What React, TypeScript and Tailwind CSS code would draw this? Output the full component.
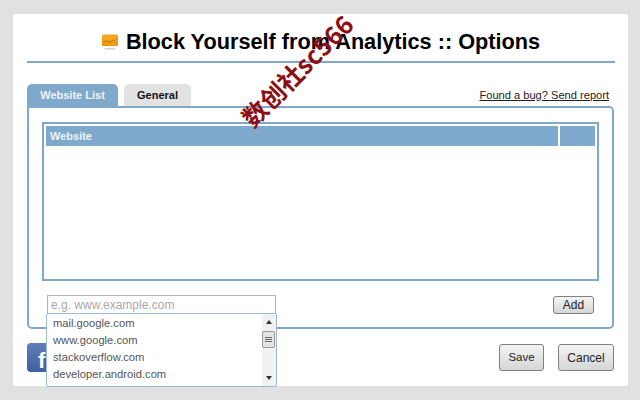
import * as React from "react"

const sites = ["mail.google.com", "www.google.com", "stackoverflow.com", "developer.android.com"]

function Logo() {
  return (
    <svg width="16" height="17" viewBox="0 0 16 17" className="shrink-0">
      <rect x="0" y="0.5" width="16" height="11.5" rx="1.5" fill="#f5a623" />
      <rect x="0" y="7" width="16" height="5" fill="#f09a12" />
      <path d="M1 7.5 L5 7 L8 8 L11 6 L13 6.5 L15.5 3.5" fill="none" stroke="#a86a10" strokeWidth="0.7" />
      <rect x="2.5" y="14" width="11" height="1.5" fill="#d2d2d2" />
    </svg>
  )
}

function GrayButton({ label, className }: { label: string; className: string }) {
  return (
    <button className={"rounded-[3px] border border-[#808080] bg-gradient-to-b from-[#f4f4f4] to-[#d6d6d6] text-[#222] " + className}>
      {label}
    </button>
  )
}

export default function App() {
  return (
    <div className="relative h-[400px] w-[640px] overflow-hidden bg-[#e1e1e1] px-[13px] pt-[14px] font-['Liberation_Sans',Arial,sans-serif]">
      <div className="relative flex h-[372px] w-[615px] flex-col rounded-[3px] bg-white px-[14px]">
        <div className="mr-[-1px] flex h-[49px] items-center justify-center gap-[8px] border-b-2 border-[#7fa9cc] pt-[9px]">
          <Logo />
          <h1 className="text-[21.7px] font-bold leading-none text-black">Block Yourself from Analytics :: Options</h1>
        </div>

        <div className="mt-[21px] flex h-[22px] items-stretch">
          <div className="flex w-[91px] items-center justify-center rounded-t-[5px] bg-[#7fa9cc] text-[11px] font-bold text-[#eef4f9]">Website List</div>
          <div className="ml-[6px] flex w-[67px] items-center justify-center rounded-t-[5px] bg-[#e2e2e2] text-[11px] font-bold text-[#111]">General</div>
          <a className="ml-auto mr-[5px] self-center text-[11.1px] leading-[14px] text-[#222] underline">Found a bug? Send report</a>
        </div>

        <div className="h-[223px] w-[587px] rounded-b-[5px] rounded-tr-[5px] border-2 border-[#7fa9cc] px-[13px] pt-[14px]">
          <div className="h-[159px] w-[557px] border-2 border-[#7fa9cc] p-[2px]">
            <div className="flex h-[20px] gap-[2px]">
              <div className="flex w-[512px] items-center bg-[#7fa9cc] pl-[4px] text-[11px] font-bold text-[#eef4f9]">Website</div>
              <div className="flex-1 bg-[#7fa9cc]" />
            </div>
          </div>
          <div className="mt-[14px] flex items-start justify-between">
            <input
              placeholder="e.g. www.example.com"
              className="ml-[5px] h-[19px] w-[229px] border border-[#b4b4b4] px-[3px] text-[12px] placeholder:text-[#a8a8a8]"
            />
            <GrayButton label="Add" className="mr-[5px] mt-px h-[18px] w-[41px] text-[12px] leading-none" />
          </div>
        </div>

        <div className="mt-[14px] flex items-start justify-between">
          <div className="flex h-[29px] w-[40px] items-end rounded-[4px] bg-gradient-to-b from-[#5f7fb8] to-[#3f5f9f] pl-[11px]">
            <span className="text-[22px] font-bold leading-[22px] text-white">f</span>
          </div>
          <div className="flex gap-[14px] pt-px">
            <GrayButton label="Save" className="h-[27px] w-[45px] text-[11.5px]" />
            <GrayButton label="Cancel" className="h-[27px] w-[56px] text-[12px]" />
          </div>
        </div>

        {/* autocomplete menu over the panel */}
        <div className="absolute left-[33px] top-[299px] flex h-[74px] w-[231px] rounded-[2px] border border-[#9dbbd6] bg-white">
          <ul className="flex-1 pl-[6px] pt-px text-[11.2px] leading-[17px] text-[#555]">
            {sites.map((s) => (
              <li key={s}>{s}</li>
            ))}
          </ul>
          <div className="flex w-[14px] flex-col items-center justify-between bg-[#f1f1f1] py-[6px]">
            <div className="h-0 w-0 border-x-[3px] border-b-[4px] border-x-transparent border-b-[#333]" />
            <div className="absolute right-[1px] top-[17px] flex h-[17px] w-[13px] flex-col items-center justify-center gap-px rounded-[2px] border border-[#9a9a9a] bg-[#e4e4e4]">
              <div className="h-px w-[7px] bg-[#666]" />
              <div className="h-px w-[7px] bg-[#666]" />
              <div className="h-px w-[7px] bg-[#666]" />
            </div>
            <div className="h-0 w-0 border-x-[3px] border-t-[4px] border-x-transparent border-t-[#333]" />
          </div>
        </div>
      </div>

      {/* watermark stamped over the page */}
      <div className="absolute left-[224px] top-[55px] -rotate-45 whitespace-nowrap font-['Noto_Sans_CJK_SC','DejaVu_Sans',sans-serif] text-[25px] font-bold leading-[30px] text-[#8c0f14]">
        数创社sc566
      </div>
    </div>
  )
}
